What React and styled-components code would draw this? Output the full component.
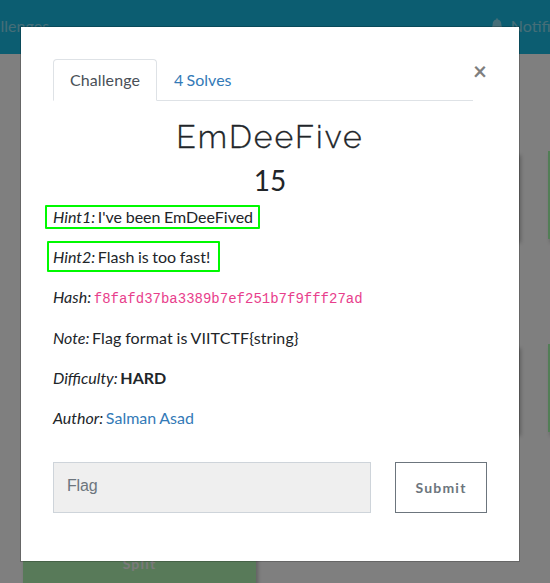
import React from 'react';
import styled, { createGlobalStyle } from 'styled-components';

const GlobalStyle = createGlobalStyle`
  * { box-sizing: border-box; }
  html, body { margin: 0; height: 100%; overflow: hidden; }
  body {
    font-family: Lato, 'Liberation Sans', sans-serif;
    font-size: 16px;
    line-height: 24px;
    color: #212529;
    background: #fff;
  }
`;

const Page = styled.div`
  height: 583px;
  overflow: hidden;
`;

const Navbar = styled.nav`
  display: flex;
  justify-content: space-between;
  height: 54px;
  padding-top: 14px;
  background: #18bae2;
  color: rgba(255, 255, 255, 0.5);
  white-space: nowrap;
`;

const NavItem = styled.span`
  display: flex;
  gap: 8px;
  margin-left: ${(p) => p.$shift || 0}px;
  margin-right: ${(p) => p.$overflow || 0}px;
  svg { margin-top: 4px; }
`;

const Board = styled.main`
  display: grid;
  grid-template-columns: repeat(3, 233px);
  grid-auto-rows: 88px;
  gap: 105px 29.5px;
  padding: 97px 0 0 23px;
`;

const Card = styled.div`
  padding-top: 15px;
  text-align: center;
  font-size: 14px;
  font-weight: 700;
  letter-spacing: 1.2px;
  color: #f4f4f4;
  background: ${(p) => (p.$solved ? '#b0f4b2' : '#a4fcac')};
  box-shadow: 2px 4px 4px rgba(0, 0, 0, 0.25);
`;

const Backdrop = styled.div`
  position: fixed;
  inset: 0;
  padding: 26px 20px;
  background: rgba(0, 0, 0, 0.5);
`;

const Dialog = styled.section`
  width: 500px;
  height: 536px;
  padding: 32px;
  border: 1px solid rgba(0, 0, 0, 0.2);
  background: #fff;
  background-clip: padding-box;
`;

const Header = styled.header`
  display: flex;
`;

const Tabs = styled.div`
  display: flex;
  width: 420px;
  height: 42px;
  border-bottom: 1px solid #dee2e6;
`;

const Tab = styled.a`
  height: 42px;
  padding: 8px 16px;
  border: 1px solid ${(p) => (p.$active ? '#dee2e6' : 'transparent')};
  border-bottom-color: ${(p) => (p.$active ? '#fff' : 'transparent')};
  border-radius: 4px 4px 0 0;
  color: ${(p) => (p.$active ? '#495057' : '#337ab7')};
  letter-spacing: ${(p) => (p.$active ? '0.1px' : '0')};
  word-spacing: -0.8px;
`;

const Close = styled.button`
  width: 14px;
  height: 24px;
  padding: 0;
  border: 0;
  background: none;
  color: #7f7f7f;
  font: 700 24px/24px Lato, sans-serif;
`;

const Title = styled.h2`
  margin: 17px 0 8px;
  text-align: center;
  font: 300 32px/38.4px Raleway, Lato, sans-serif;
  letter-spacing: 2px;
  -webkit-text-stroke: 0.35px #212529;
`;

const Points = styled.h3`
  margin: 0 0 7px;
  text-align: center;
  font-size: 28px;
  line-height: 33.6px;
  font-weight: 400;
`;

const Line = styled.p`
  margin: 0 0 16px;
  line-height: 24px;
  letter-spacing: ${(p) => p.$track || 0}px;
  word-spacing: -0.5px;

  em { margin-right: -1px; letter-spacing: 0; }
`;

const Marked = styled.span`
  display: block;
  width: ${(p) => p.$w}px;
  height: ${(p) => p.$h}px;
  margin: ${(p) => p.$margin};
  padding: ${(p) => p.$pad};
  border: 2px solid #00f900;
  border-radius: 1px;
  line-height: ${(p) => p.$lh}px;
`;

const HashLine = styled(Line)`
  height: 25px;
`;

const Hash = styled.code`
  font-family: 'Liberation Mono', monospace;
  font-size: 14px;
  line-height: 20px;
  letter-spacing: 0;
  color: #e83e8c;
`;

const Link = styled.a`
  color: #337ab7;
`;

const Form = styled.form`
  display: flex;
  gap: 24px;
  margin-top: 32px;
`;

const FlagInput = styled.input`
  width: 318px;
  height: 51px;
  padding: 0 13px 4px;
  border: 1px solid #ced4da;
  border-radius: 0;
  background: #efefef;
  font: 16px 'Liberation Sans', Arial, sans-serif;
  letter-spacing: -0.15px;
  &::placeholder { color: #6c757d; opacity: 1; }
`;

const Submit = styled.button`
  width: 92px;
  height: 51px;
  padding: 0;
  border: 1px solid #6c757d;
  background: transparent;
  color: #6c757d;
  font: 700 14px Lato, sans-serif;
  letter-spacing: 1.2px;
`;

const Bell = () => (
  <svg width="12" height="14" viewBox="0 0 448 512" fill="currentColor" aria-hidden="true">
    <path d="M224 512c35 0 64-29 64-64H160c0 35 29 64 64 64zm215-150c-19-21-55-52-55-154 0-78-54-140-128-155V32a32 32 0 0 0-64 0v21C118 68 64 130 64 208c0 102-36 133-55 154-6 6-9 14-9 22 0 16 13 32 32 32h384c19 0 32-16 32-32 0-8-3-16-9-22z" />
  </svg>
);

export default function App() {
  return (
    <Page>
      <GlobalStyle />
      <Navbar>
        <NavItem $shift={-27}>Challenges</NavItem>
        <NavItem $overflow={-51}><Bell />Notifications</NavItem>
      </Navbar>
      <Board>
        <Card /><Card /><Card />
        <Card /><Card /><Card />
        <Card $solved>Split</Card>
      </Board>
      <Backdrop>
        <Dialog role="dialog">
          <Header>
            <Tabs>
              <Tab $active>Challenge</Tab>
              <Tab>4 Solves</Tab>
            </Tabs>
            <Close aria-label="Close">×</Close>
          </Header>
          <Title>EmDeeFive</Title>
          <Points>15</Points>
          <Line>
            <Marked $w={215} $h={24} $lh={20} $margin="0 0 0 -8px" $pad="0 0 0 6px">
              <em>Hint1:</em> I've been EmDeeFived
            </Marked>
          </Line>
          <Line>
            <Marked $w={173} $h={31} $lh={24} $margin="-4px 0 -3px -6px" $pad="2px 0 0 4px">
              <em>Hint2:</em> Flash is too fast!
            </Marked>
          </Line>
          <HashLine><em>Hash:</em> <Hash>f8fafd37ba3389b7ef251b7f9fff27ad</Hash></HashLine>
          <Line $track={0.1}><em>Note:</em> Flag format is VIITCTF{'{string}'}</Line>
          <Line><em>Difficulty:</em> <b>HARD</b></Line>
          <Line><em>Author:</em> <Link>Salman Asad</Link></Line>
          <Form>
            <FlagInput placeholder="Flag" />
            <Submit type="button">Submit</Submit>
          </Form>
        </Dialog>
      </Backdrop>
    </Page>
  );
}
